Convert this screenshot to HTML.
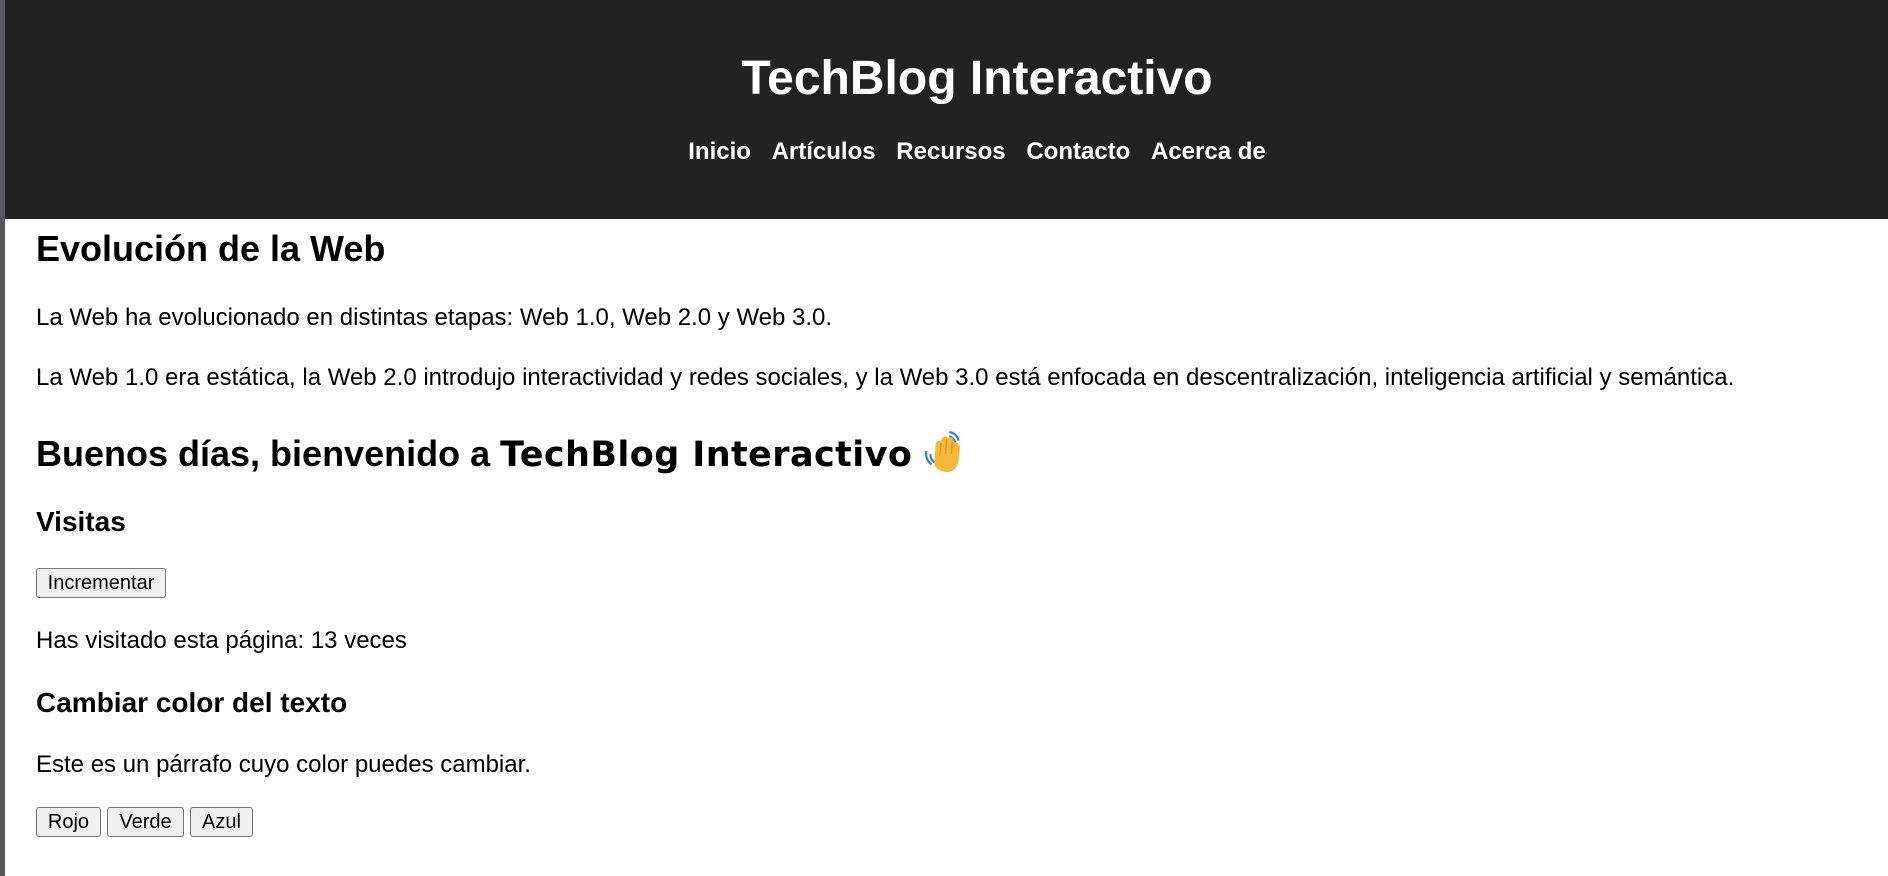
<!DOCTYPE html>
<html><head><meta charset="utf-8"><style>
html,body{margin:0;padding:0;width:1888px;height:876px;overflow:hidden;background:#fff;font-family:"Liberation Sans",Arial,sans-serif;color:#000}
.strip{position:absolute;left:0;top:0;width:5px;height:876px;background:#58585e}
header{position:absolute;left:5px;top:0;width:1944px;height:219px;background:#222;color:#fff;text-align:center}
header h1{position:absolute;left:0;right:0;top:51px;margin:0;font-size:48px;line-height:56px;font-weight:bold}
header nav{position:absolute;left:0;right:0;top:138px;font-size:24px;font-weight:bold;line-height:28px}
header nav span{margin:0 7px}
.t{position:absolute;left:36px;white-space:nowrap}
.h2{font-size:36px;font-weight:bold;line-height:42px}
.h3{font-size:28px;font-weight:bold;line-height:32px}
.p{font-size:24px;line-height:28px}
.btn{position:absolute;height:30px;box-sizing:border-box;border:1.5px solid #767676;border-radius:3px;background:#efefef;font-size:20px;line-height:28px;text-align:center;font-family:"Liberation Sans",Arial,sans-serif}
</style></head><body>
<div class="strip"></div>
<header>
<h1>TechBlog Interactivo</h1>
<nav><span>Inicio</span> <span>Artículos</span> <span>Recursos</span> <span>Contacto</span> <span>Acerca de</span></nav>
</header>
<div class="t h2" style="top:228px">Evolución de la Web</div>
<div class="t p" style="top:304px">La Web ha evolucionado en distintas etapas: Web 1.0, Web 2.0 y Web 3.0.</div>
<div class="t p" style="top:364px">La Web 1.0 era estática, la Web 2.0 introdujo interactividad y redes sociales, y la Web 3.0 está enfocada en descentralización, inteligencia artificial y semántica.</div>
<div class="t h2" style="top:433px">Buenos días, bienvenido a <span style="font-family:'DejaVu Sans',Verdana,sans-serif;font-size:35px;letter-spacing:0.4px">TechBlog Interactivo</span></div>
<svg style="position:absolute;left:922px;top:430px" width="44" height="44" viewBox="0 0 40 42">
<path d="M3 20 Q2 28 8 33" stroke="#2a7fd4" stroke-width="2" fill="none"/>
<path d="M7 23 Q7 28 11 31" stroke="#2a7fd4" stroke-width="2" fill="none"/>
<path d="M25 2 Q32 3 34 10" stroke="#2a7fd4" stroke-width="2" fill="none"/>
<path d="M25 6 Q29 7 31 12" stroke="#2a7fd4" stroke-width="2" fill="none"/>
<path d="M11 27 L12 14 Q13 9 17 11 L18 8 Q20 5 23 7 L25 7 Q29 6 29 11 L32 12 Q36 13 35 19 L34 30 Q31 41 22 40 Q13 39 11 33 Z" fill="#f6b93b"/>
<path d="M17 12 L16 25 M22.5 8 L21.5 23 M28 11 L27 23" stroke="#d99a20" stroke-width="1.3" fill="none"/>
</svg>
<div class="t h3" style="top:506px">Visitas</div>
<div class="btn" style="left:36px;top:568px;width:130px">Incrementar</div>
<div class="t p" style="top:627px">Has visitado esta página: 13 veces</div>
<div class="t h3" style="top:687px">Cambiar color del texto</div>
<div class="t p" style="top:751px">Este es un párrafo cuyo color puedes cambiar.</div>
<div class="btn" style="left:36px;top:807px;width:65px">Rojo</div>
<div class="btn" style="left:107px;top:807px;width:77px">Verde</div>
<div class="btn" style="left:190px;top:807px;width:63px">Azul</div>
</body></html>
